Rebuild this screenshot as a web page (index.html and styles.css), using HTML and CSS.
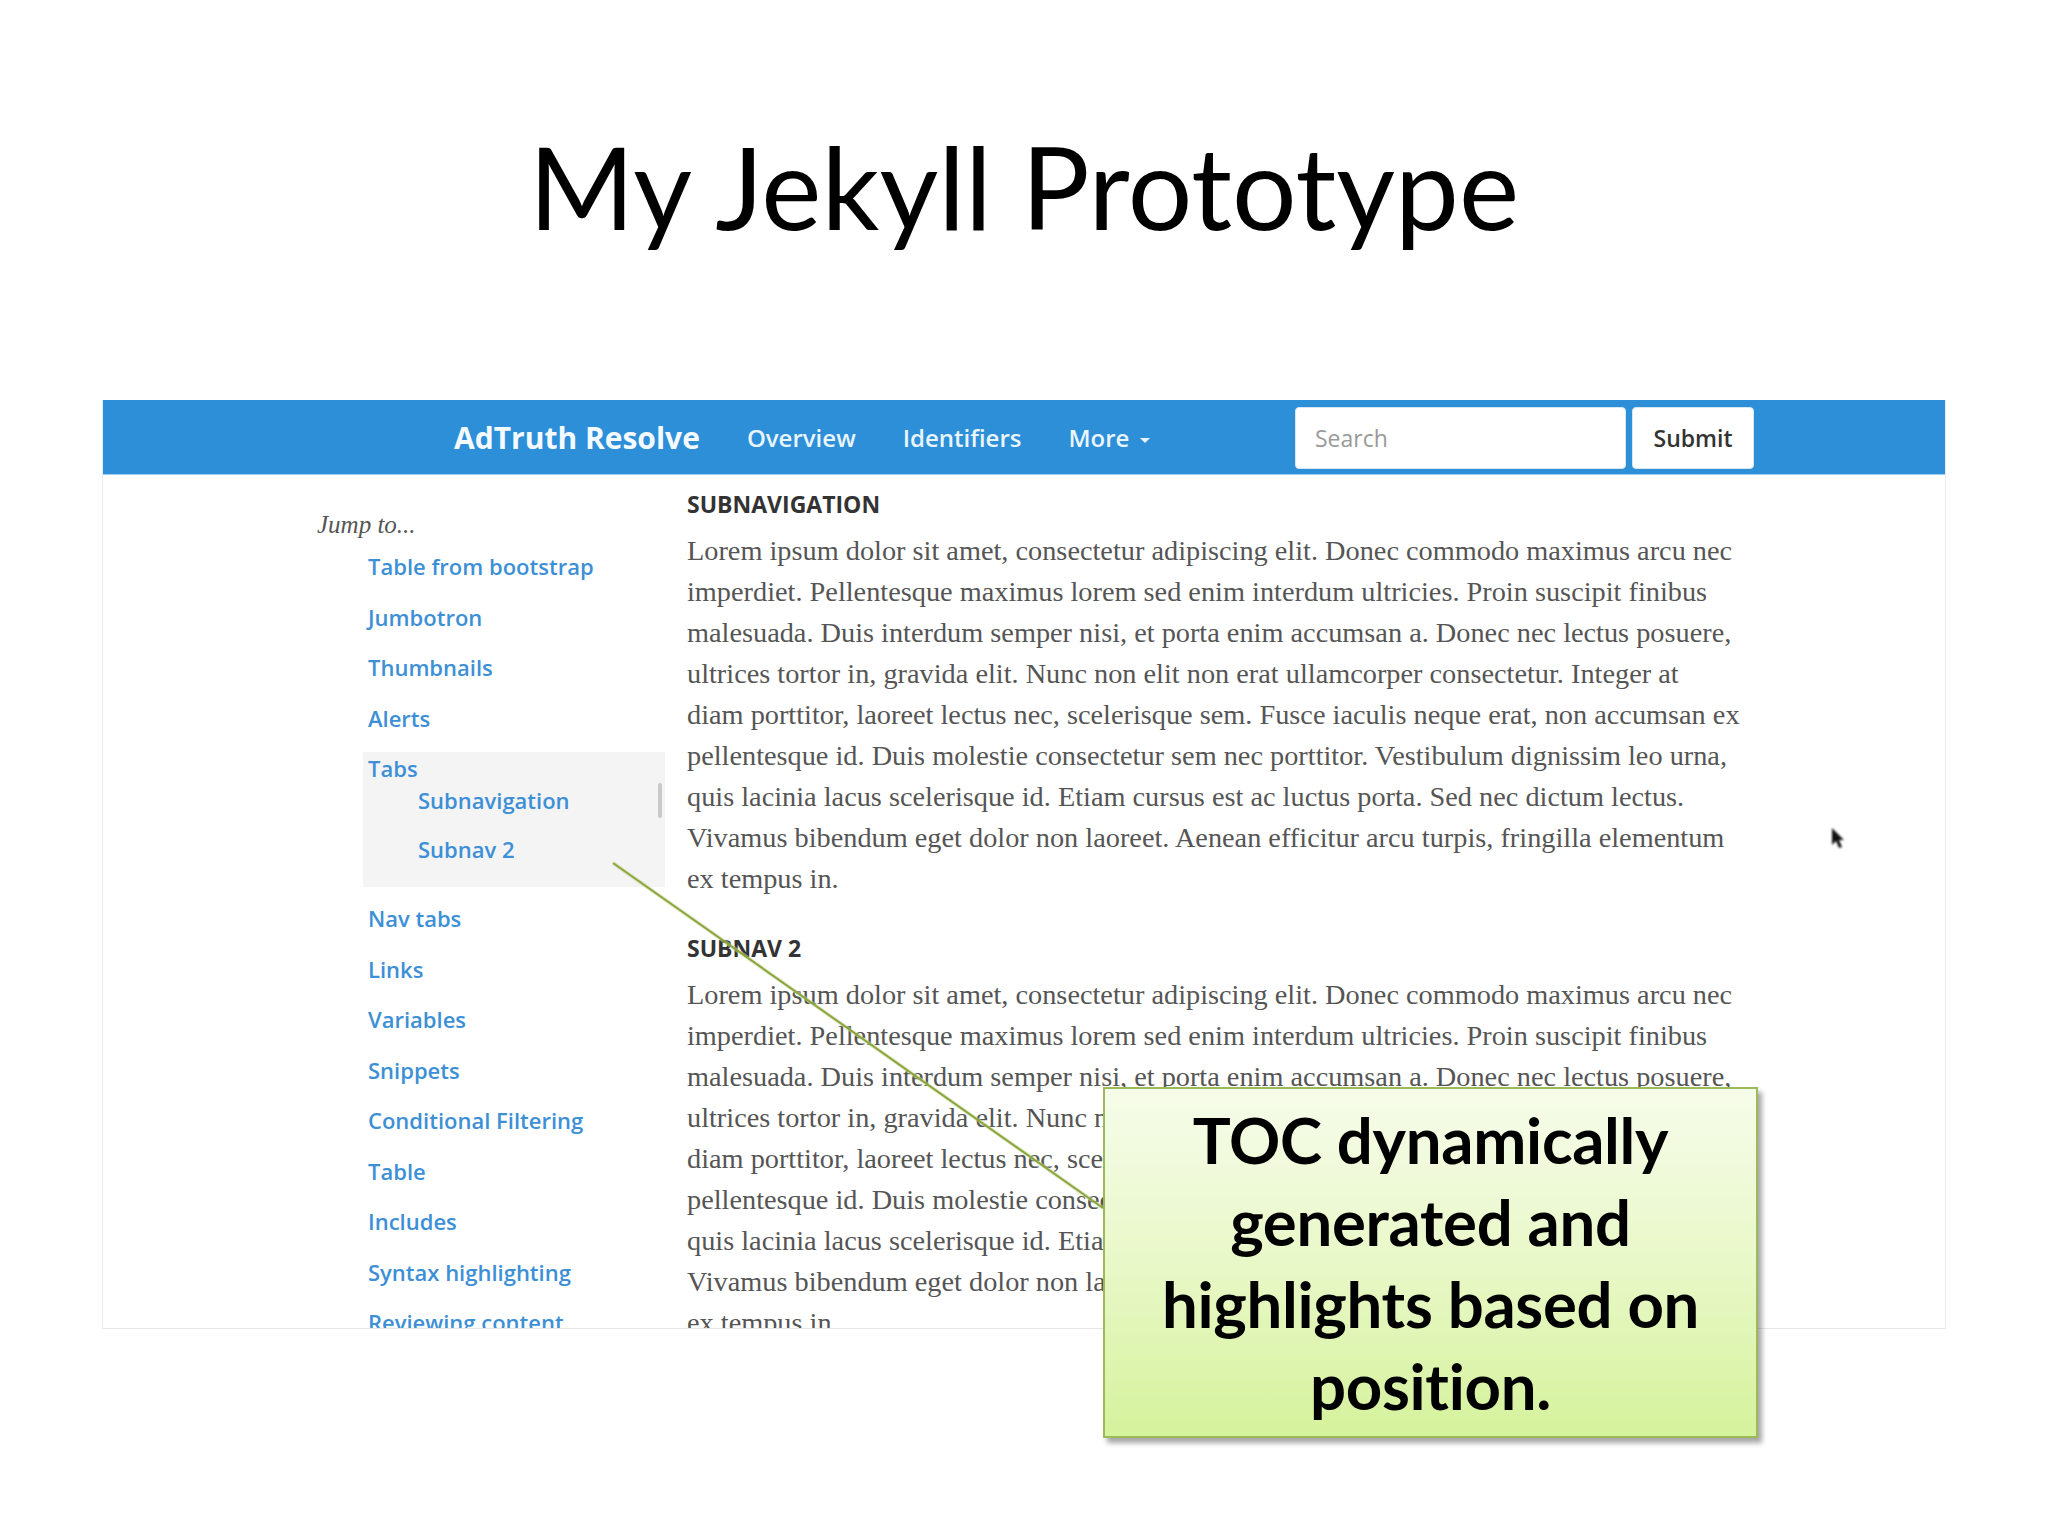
FILE: index.html
```html
<!DOCTYPE html>
<html lang="en">
<head>
<meta charset="utf-8">
<title>My Jekyll Prototype</title>
<link rel="stylesheet" href="styles.css">
</head>
<body>
<div class="slide">
  <h1 class="title">My Jekyll Prototype</h1>
  <div class="stage">
    <div class="frame">
      <nav class="navbar">
        <span class="brand">AdTruth Resolve</span>
        <ul class="navlinks">
          <li>Overview</li>
          <li>Identifiers</li>
          <li>More <span class="caret"></span></li>
        </ul>
        <form class="search">
          <div class="search-input">Search</div>
          <div class="submit">Submit</div>
        </form>
      </nav>
      <div class="page">
        <aside class="sidebar">
          <div class="jump">Jump to...</div>
          <ul class="toc">
            <li class="item">Table from bootstrap</li>
            <li class="item">Jumbotron</li>
            <li class="item">Thumbnails</li>
            <li class="item">Alerts</li>
            <li class="active">
              <div class="active-label">Tabs</div>
              <ul class="subtoc">
                <li>Subnavigation</li>
                <li class="second">Subnav 2</li>
              </ul>
              <span class="scroll-ind"></span>
            </li>
            <li class="item">Nav tabs</li>
            <li class="item">Links</li>
            <li class="item">Variables</li>
            <li class="item">Snippets</li>
            <li class="item">Conditional Filtering</li>
            <li class="item">Table</li>
            <li class="item">Includes</li>
            <li class="item">Syntax highlighting</li>
            <li class="item">Reviewing content</li>
          </ul>
        </aside>
        <main class="main">
          <h3 class="sec-title">SUBNAVIGATION</h3>
          <p class="para">Lorem ipsum dolor sit amet, consectetur adipiscing elit. Donec commodo maximus arcu nec<br>imperdiet. Pellentesque maximus lorem sed enim interdum ultricies. Proin suscipit finibus<br>malesuada. Duis interdum semper nisi, et porta enim accumsan a. Donec nec lectus posuere,<br>ultrices tortor in, gravida elit. Nunc non elit non erat ullamcorper consectetur. Integer at<br>diam porttitor, laoreet lectus nec, scelerisque sem. Fusce iaculis neque erat, non accumsan ex<br>pellentesque id. Duis molestie consectetur sem nec porttitor. Vestibulum dignissim leo urna,<br>quis lacinia lacus scelerisque id. Etiam cursus est ac luctus porta. Sed nec dictum lectus.<br>Vivamus bibendum eget dolor non laoreet. Aenean efficitur arcu turpis, fringilla elementum<br>ex tempus in.</p>
          <h3 class="sec-title">SUBNAV 2</h3>
          <p class="para">Lorem ipsum dolor sit amet, consectetur adipiscing elit. Donec commodo maximus arcu nec<br>imperdiet. Pellentesque maximus lorem sed enim interdum ultricies. Proin suscipit finibus<br>malesuada. Duis interdum semper nisi, et porta enim accumsan a. Donec nec lectus posuere,<br>ultrices tortor in, gravida elit. Nunc non elit non erat ullamcorper consectetur. Integer at<br>diam porttitor, laoreet lectus nec, scelerisque sem. Fusce iaculis neque erat, non accumsan ex<br>pellentesque id. Duis molestie consectetur sem nec porttitor. Vestibulum dignissim leo urna,<br>quis lacinia lacus scelerisque id. Etiam cursus est ac luctus porta. Sed nec dictum lectus.<br>Vivamus bibendum eget dolor non laoreet. Aenean efficitur arcu turpis, fringilla elementum<br>ex tempus in.</p>
        </main>
      </div>
    </div>
    <svg class="connector" width="2048" height="1136" viewBox="0 0 2048 1136">
      <line x1="613" y1="463" x2="1103" y2="808" stroke="#c9d6a3" stroke-width="4" opacity="0.5"/>
      <line x1="613" y1="463" x2="1103" y2="808" stroke="#8ba63a" stroke-width="2"/>
    </svg>
    <div class="callout">TOC dynamically<br>generated and<br>highlights based on<br>position.</div>
    <svg class="cursor" width="18" height="24" viewBox="0 0 18 24">
      <path d="M2 1 L2 18 L6 14 L9 21 L12 20 L9 13 L14 13 Z" fill="#111"/>
    </svg>
  </div>
</div>
</body>
</html>
```
FILE: styles.css
```css
html, body {
  margin: 0;
  padding: 0;
  background: #ffffff;
}
body {
  width: 2048px;
  height: 1536px;
  overflow: hidden;
}
.slide {
  width: 2048px;
  height: 1536px;
}
.title {
  margin: 0;
  padding-top: 129px;
  font-family: Lato, "Open Sans", sans-serif;
  font-weight: 400;
  font-size: 114px;
  line-height: 114px;
  text-align: center;
  color: #000;
}
.stage {
  position: relative;
  margin-top: 157px;
  width: 2048px;
  height: 1136px;
}
.frame {
  box-sizing: border-box;
  margin-left: 102px;
  width: 1844px;
  height: 929px;
  border-left: 1px solid #ececec;
  border-right: 1px solid #ececec;
  border-bottom: 1px solid #e6e6e6;
  overflow: hidden;
  background: #fff;
}
.navbar {
  box-sizing: border-box;
  height: 75px;
  background: #2d8fd8;
  border-bottom: 1px solid #9fd2f2;
  display: flex;
  align-items: center;
  padding-left: 351px;
  padding-right: 191px;
  font-family: "Open Sans", sans-serif;
  color: #fff;
}
.brand {
  font-weight: 700;
  font-size: 30px;
  margin-right: 47px;
  color: #f4faff;
}
.navlinks {
  display: flex;
  gap: 47px;
  margin: 0;
  padding: 0;
  list-style: none;
  font-weight: 600;
  font-size: 24px;
  color: #e9f5fd;
}
.caret {
  display: inline-block;
  width: 0;
  height: 0;
  margin-left: 4px;
  vertical-align: middle;
  border-top: 5px solid #e9f5fd;
  border-left: 5px solid transparent;
  border-right: 5px solid transparent;
}
.search {
  margin: 0 0 0 auto;
  display: flex;
  gap: 6px;
  height: 62px;
  padding-top: 1px;
}
.search-input {
  box-sizing: border-box;
  width: 331px;
  height: 62px;
  background: #fff;
  border: 1px solid #d8e6f2;
  border-radius: 4px;
  padding-left: 19px;
  display: flex;
  align-items: center;
  font-weight: 400;
  font-size: 23px;
  color: #9a9a9a;
}
.submit {
  box-sizing: border-box;
  width: 122px;
  height: 62px;
  background: #fff;
  border: 1px solid #d8e6f2;
  border-radius: 4px;
  display: flex;
  align-items: center;
  justify-content: center;
  font-weight: 600;
  font-size: 23px;
  color: #333;
}
.page {
  display: flex;
  align-items: flex-start;
}
.sidebar {
  box-sizing: border-box;
  width: 563px;
  flex: none;
  padding-left: 214px;
  padding-top: 34px;
}
.jump {
  font-family: "Liberation Serif", serif;
  font-style: italic;
  font-size: 25px;
  line-height: 32px;
  color: #555;
}
.toc {
  list-style: none;
  margin: 0 0 0 46px;
  padding: 0;
  width: 302px;
  font-family: "Open Sans", sans-serif;
  font-weight: 600;
  font-size: 22px;
  color: #3d8fd6;
}
.item {
  line-height: 50.5px;
  padding-left: 5px;
  white-space: nowrap;
}
.active {
  position: relative;
  margin-top: 9px;
  margin-bottom: 6px;
  padding: 0 0 22px 5px;
  background: #f4f4f5;
  line-height: 32px;
}
.active-label {
  line-height: 32px;
}
.subtoc {
  list-style: none;
  margin: 0;
  padding: 0 0 0 50px;
}
.subtoc li {
  line-height: 32px;
}
.subtoc .second {
  margin-top: 17px;
}
.scroll-ind {
  position: absolute;
  right: 3px;
  top: 31px;
  width: 4px;
  height: 35px;
  border-radius: 2px;
  background: #c9c9c9;
}
.main {
  margin-left: 21px;
  padding-top: 14px;
  flex: 1;
}
.sec-title {
  margin: 0 0 11px 0;
  font-family: "Open Sans", sans-serif;
  font-weight: 700;
  font-size: 23px;
  line-height: 30px;
  color: #333;
}
.para {
  margin: 0 0 34px 0;
  font-family: "Liberation Serif", serif;
  font-size: 28.3px;
  line-height: 41px;
  color: #555;
  white-space: nowrap;
}
.connector {
  position: absolute;
  left: 0;
  top: 0;
  pointer-events: none;
}
.callout {
  position: absolute;
  left: 1103px;
  top: 687px;
  box-sizing: border-box;
  width: 655px;
  height: 351px;
  display: flex;
  align-items: center;
  justify-content: center;
  text-align: center;
  background: linear-gradient(to bottom, #f6fcea 0%, #e9f8c8 50%, #d5f29c 100%);
  border: 2px solid #9cba5a;
  box-shadow: 4px 5px 5px rgba(0, 0, 0, 0.35);
  font-family: Lato, "Open Sans", sans-serif;
  font-weight: 700;
  font-size: 63.5px;
  line-height: 82px;
  letter-spacing: -0.3px;
  color: #000;
}
.cursor {
  position: absolute;
  left: 1830px;
  top: 427px;
  filter: blur(0.8px);
}
```
